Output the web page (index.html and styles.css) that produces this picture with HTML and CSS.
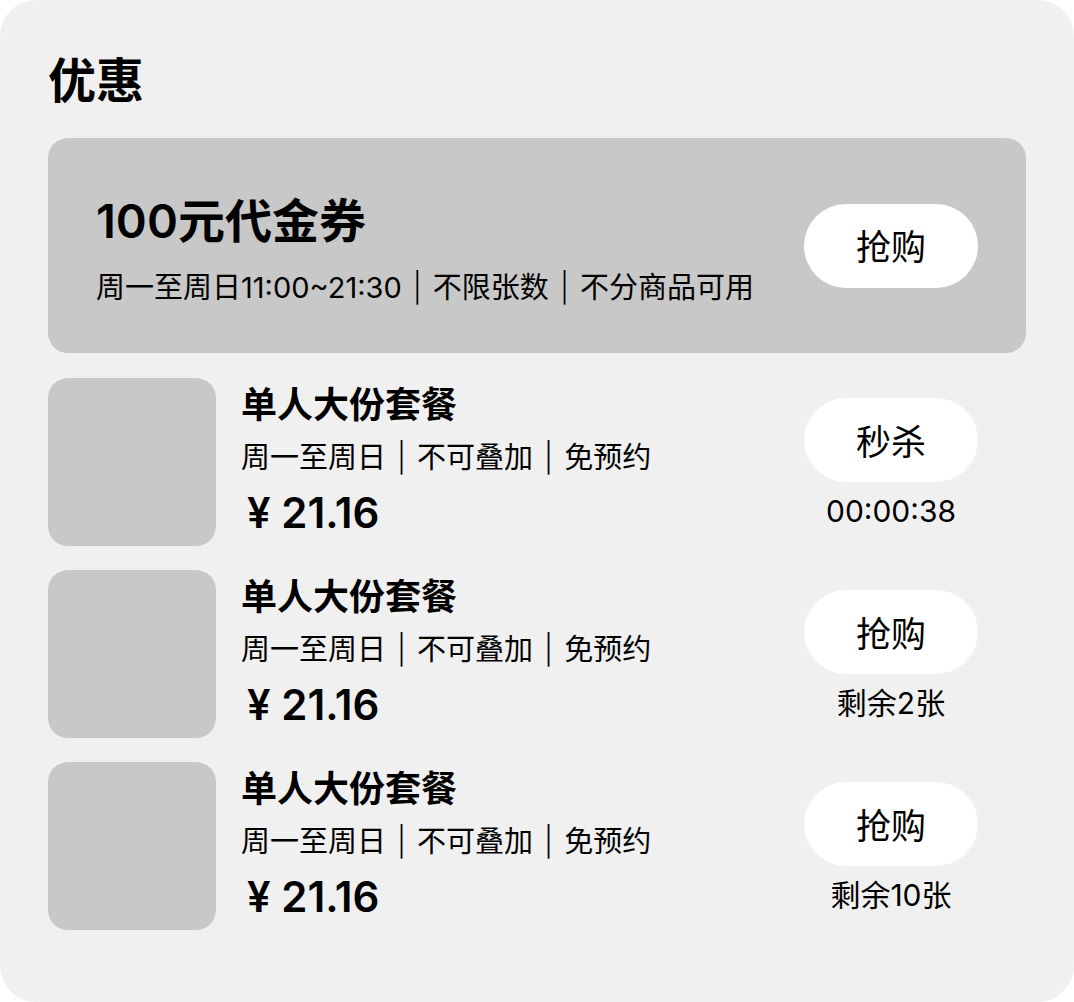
FILE: index.html
```html
<!DOCTYPE html>
<html lang="zh-CN">
<head>
<meta charset="utf-8">
<link rel="stylesheet" href="styles.css">
</head>
<body>
<div class="panel">
  <h1 class="panel-title">优惠</h1>
  <div class="coupon">
    <div class="coupon-info">
      <div class="coupon-name">100元代金券</div>
      <div class="coupon-desc">周一至周日11:00~21:30<span class="sep">|</span>不限张数<span class="sep">|</span>不分商品可用</div>
    </div>
    <div class="btn">抢购</div>
  </div>
  <div class="deal">
    <div class="thumb"></div>
    <div class="deal-info">
      <div class="deal-name">单人大份套餐</div>
      <div class="deal-desc">周一至周日<span class="sep">|</span>不可叠加<span class="sep">|</span>免预约</div>
      <div class="deal-price">¥ 21.16</div>
    </div>
    <div class="deal-action">
      <div class="btn">秒杀</div>
      <div class="deal-note">00:00:38</div>
    </div>
  </div>
  <div class="deal">
    <div class="thumb"></div>
    <div class="deal-info">
      <div class="deal-name">单人大份套餐</div>
      <div class="deal-desc">周一至周日<span class="sep">|</span>不可叠加<span class="sep">|</span>免预约</div>
      <div class="deal-price">¥ 21.16</div>
    </div>
    <div class="deal-action">
      <div class="btn">抢购</div>
      <div class="deal-note">剩余2张</div>
    </div>
  </div>
  <div class="deal">
    <div class="thumb"></div>
    <div class="deal-info">
      <div class="deal-name">单人大份套餐</div>
      <div class="deal-desc">周一至周日<span class="sep">|</span>不可叠加<span class="sep">|</span>免预约</div>
      <div class="deal-price">¥ 21.16</div>
    </div>
    <div class="deal-action">
      <div class="btn">抢购</div>
      <div class="deal-note">剩余10张</div>
    </div>
  </div>
</div>
</body>
</html>
```
FILE: styles.css
```css
* { box-sizing: border-box; }
html, body { margin: 0; padding: 0; background: #ffffff; }
body {
  font-family: "Inter", "Noto Sans CJK SC", sans-serif;
  color: #000;
}
.panel {
  width: 1074px;
  height: 1002px;
  background: #f0f0f0;
  border-radius: 36px;
  padding: 48px 48px 72px;
}
.panel-title {
  margin: 0 0 24px;
  font-size: 48px;
  line-height: 66px;
  font-weight: 700;
}
.coupon {
  height: 215px;
  background: #c8c8c8;
  border-radius: 20px;
  padding: 0 48px;
  display: flex;
  align-items: center;
  justify-content: space-between;
}
.coupon-info { padding-top: 7px; }
.coupon-name {
  font-size: 47px;
  line-height: 60px;
  font-weight: 600;
}
.coupon-desc {
  font-size: 29px;
  line-height: 40px;
  margin-top: 17px;
}
.sep {
  margin: 0 11px;
  font-weight: 300;
}
.btn {
  width: 174px;
  height: 84px;
  border-radius: 42px;
  background: #fff;
  display: flex;
  align-items: center;
  justify-content: center;
  font-size: 35px;
  padding-bottom: 2px;
}
.deal {
  display: flex;
  margin-top: 24px;
  padding-right: 48px;
}
.coupon + .deal { margin-top: 25px; }
.thumb {
  width: 168px;
  height: 168px;
  border-radius: 20px;
  background: #c8c8c8;
  flex: none;
}
.deal-info {
  flex: 1;
  margin-left: 25px;
  padding-top: 3px;
}
.deal-name {
  font-size: 36px;
  line-height: 48px;
  font-weight: 700;
}
.deal-desc {
  font-size: 29px;
  line-height: 58px;
}
.deal-price {
  font-size: 42px;
  line-height: 52px;
  font-weight: 600;
  padding-left: 6px;
}
.deal-action {
  width: 174px;
  margin-top: 20px;
  text-align: center;
}
.deal-note {
  font-size: 30px;
  line-height: 36px;
  margin-top: 11px;
}
```
